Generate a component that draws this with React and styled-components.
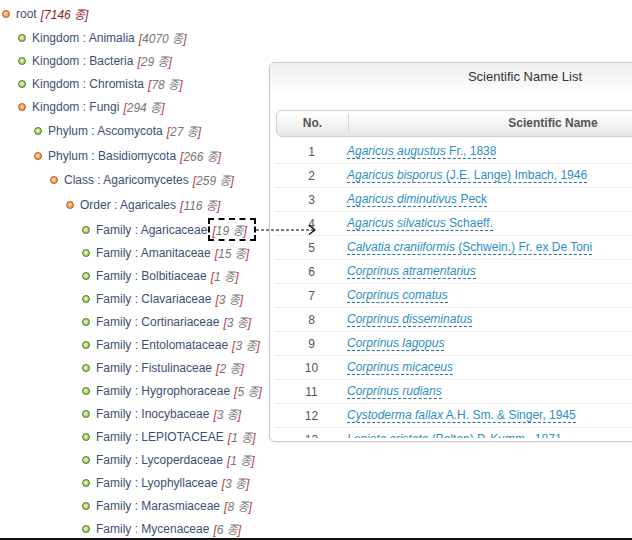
import React from 'react';
import styled, { createGlobalStyle } from 'styled-components';

const Global = createGlobalStyle`
  body {
    margin: 0;
    background: #fff;
    font-family: "Liberation Sans", Arial, "Noto Sans CJK KR", sans-serif;
  }
`

const Frame = styled.div`
  position: relative;
  width: 632px;
  height: 540px;
  overflow: hidden;
  background: #fff;
  box-sizing: border-box;
  border-bottom: 2px solid #111;
`

const Tree = styled.ul`
  list-style: none;
  margin: 0;
  padding: 2px 0 0 0;
`

const Row = styled.li`
  display: flex;
  align-items: center;
  height: 23px;
  margin-top: ${p => p.$lift || 0}px;
  padding-left: ${p => p.$depth * 16 + 2}px;
  font-size: 12px;
  white-space: nowrap;
`

const Bullet = styled.span`
  width: 6px;
  height: 6px;
  border-radius: 50%;
  margin-right: 6px;
  flex: none;
  border: 1px solid ${p => p.$open ? '#b8591a' : '#4f7f1c'};
  background: ${p => p.$open
    ? 'radial-gradient(circle at 45% 45%, #fcd9ae 0, #f0a45a 55%, #d0732a 100%)'
    : 'radial-gradient(circle at 45% 45%, #eef7dc 0, #b5d67a 50%, #6a9a2c 100%)'};
`

const Label = styled.span`
  color: #3d4f73;
`

const Count = styled.span`
  margin-left: 4px;
  font-style: italic;
  color: ${p => p.$root ? '#8e1f1f' : '#777'};
  position: relative;
  ${p => p.$marked && `
    z-index: 2;
    margin-left: 1px;
    padding: 1px 7px 1px 2px;
    border: 2px dashed #000;
  `}
`

const Bracket = styled.span`
  color: ${p => p.$root ? '#8e1f1f' : '#c0392b'};
`

const Arrow = styled.svg`
  position: absolute;
  left: 100%;
  top: 50%;
  margin-left: 2px;
  margin-top: -6px;
  overflow: visible;
`

const Panel = styled.div`
  position: absolute;
  left: 269px;
  top: 62px;
  width: 512px;
  height: 380px;
  box-sizing: border-box;
  border: 1px solid #c9c9c9;
  border-radius: 6px;
  background: #fff;
  box-shadow: 0 1px 2px rgba(0, 0, 0, 0.08);
  overflow: hidden;
`

const Title = styled.div`
  height: 47px;
  padding-top: 6px;
  box-sizing: border-box;
  text-align: center;
  font-size: 13px;
  color: #333;
  background: linear-gradient(#efefef, #fafafa 24px, #fff 30px);
`

const Header = styled.div`
  display: grid;
  grid-template-columns: 71px 1fr;
  align-items: center;
  height: 25px;
  margin: 0 6px;
  border: 1px solid #cfcfcf;
  border-radius: 6px;
  background: linear-gradient(#ffffff, #f2f2f2 60%, #e6e6e6);
  font-size: 12px;
  font-weight: bold;
  color: #555;
`

const HeadCell = styled.div`
  text-align: center;
  border-left: ${p => p.$divided ? '1px solid #d8d8d8' : 'none'};
  padding-right: ${p => p.$divided ? 16 : 0}px;
  line-height: 19px;
`

const Body = styled.div`
  margin: 3px 6px 0;
  height: 298px;
  overflow: hidden;
`

const NameRow = styled.div`
  display: grid;
  grid-template-columns: 71px 1fr;
  align-items: center;
  height: 24px;
  box-sizing: border-box;
  border-bottom: 1px dotted #dedede;
  font-size: 12px;
`

const No = styled.div`
  text-align: center;
  color: #555;
`

const NameLink = styled.a`
  justify-self: start;
  color: #2a8fc4;
  text-decoration: none;
  border-bottom: 1px dashed #2a6f9a;
  line-height: 14px;
  cursor: pointer;
`

const Genus = styled.i``

const nodes = [
  { depth: 0, label: 'root', count: 7146, open: true, root: true },
  { depth: 1, label: 'Kingdom : Animalia', count: 4070, lift: 1 },
  { depth: 1, label: 'Kingdom : Bacteria', count: 29 },
  { depth: 1, label: 'Kingdom : Chromista', count: 78 },
  { depth: 1, label: 'Kingdom : Fungi', count: 294, open: true },
  { depth: 2, label: 'Phylum : Ascomycota', count: 27, lift: 1 },
  { depth: 2, label: 'Phylum : Basidiomycota', count: 266, open: true, lift: 2 },
  { depth: 3, label: 'Class : Agaricomycetes', count: 259, open: true, lift: 1 },
  { depth: 4, label: 'Order : Agaricales', count: 116, open: true, lift: 2 },
  { depth: 5, label: 'Family : Agaricaceae', count: 19, lift: 2, marked: true },
  { depth: 5, label: 'Family : Amanitaceae', count: 15 },
  { depth: 5, label: 'Family : Bolbitiaceae', count: 1 },
  { depth: 5, label: 'Family : Clavariaceae', count: 3 },
  { depth: 5, label: 'Family : Cortinariaceae', count: 3 },
  { depth: 5, label: 'Family : Entolomataceae', count: 3 },
  { depth: 5, label: 'Family : Fistulinaceae', count: 2 },
  { depth: 5, label: 'Family : Hygrophoraceae', count: 5 },
  { depth: 5, label: 'Family : Inocybaceae', count: 3 },
  { depth: 5, label: 'Family : LEPIOTACEAE', count: 1 },
  { depth: 5, label: 'Family : Lycoperdaceae', count: 1 },
  { depth: 5, label: 'Family : Lyophyllaceae', count: 3 },
  { depth: 5, label: 'Family : Marasmiaceae', count: 8 },
  { depth: 5, label: 'Family : Mycenaceae', count: 6 },
]

const names = [
  ['Agaricus augustus', 'Fr., 1838'],
  ['Agaricus bisporus', '(J.E. Lange) Imbach, 1946'],
  ['Agaricus diminutivus', 'Peck'],
  ['Agaricus silvaticus', 'Schaeff.'],
  ['Calvatia craniiformis', '(Schwein.) Fr. ex De Toni'],
  ['Corprinus atramentarius', ''],
  ['Corprinus comatus', ''],
  ['Corprinus disseminatus', ''],
  ['Corprinus lagopus', ''],
  ['Corprinus micaceus', ''],
  ['Corprinus rudians', ''],
  ['Cystoderma fallax', 'A.H. Sm. & Singer, 1945'],
  ['Lepiota cristata', '(Bolton) P. Kumm., 1871'],
]

const App = () => {
  return (
    <Frame>
      <Global />
      <Tree>
        {nodes.map(n => (
          <Row key={n.label} $depth={n.depth} $lift={n.lift}>
            <Bullet $open={n.open} />
            <Label>{n.label}</Label>
            <Count $root={n.root} $marked={n.marked}>
              <Bracket $root={n.root}>[</Bracket>{n.count} 종<Bracket $root={n.root}>]</Bracket>
              {n.marked && (
                <Arrow width="62" height="12" viewBox="0 0 62 12">
                  <line x1="0" y1="6" x2="59" y2="6" stroke="#000" strokeWidth="1" strokeDasharray="3 2" />
                  <polyline points="53,1.5 59,6 53,10.5" fill="none" stroke="#000" strokeWidth="1.2" />
                </Arrow>
              )}
            </Count>
          </Row>
        ))}
      </Tree>

      <Panel>
        <Title>Scientific Name List</Title>
        <Header>
          <HeadCell>No.</HeadCell>
          <HeadCell $divided>Scientific Name</HeadCell>
        </Header>
        <Body>
          {names.map(([genus, author], i) => (
            <NameRow key={genus}>
              <No>{i + 1}</No>
              <NameLink>
                <Genus>{genus}</Genus>{author && ' ' + author}
              </NameLink>
            </NameRow>
          ))}
        </Body>
      </Panel>
    </Frame>
  )
}

export default App;
